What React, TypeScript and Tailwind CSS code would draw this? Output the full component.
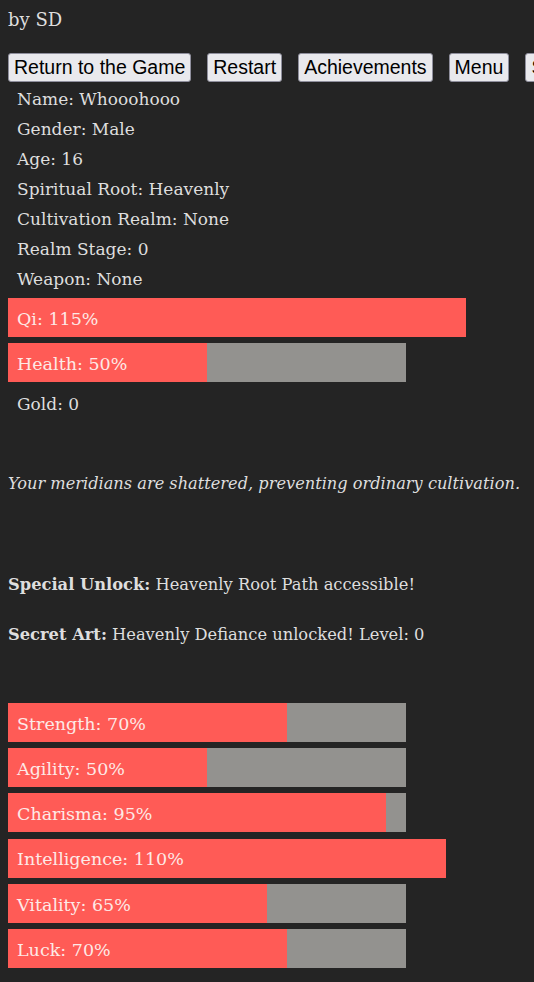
const info = [
  "Name: Whooohooo",
  "Gender: Male",
  "Age: 16",
  "Spiritual Root: Heavenly",
  "Cultivation Realm: None",
  "Realm Stage: 0",
  "Weapon: None",
];

const attributes = [
  { label: "Strength", value: 70 },
  { label: "Agility", value: 50 },
  { label: "Charisma", value: 95 },
  { label: "Intelligence", value: 110 },
  { label: "Vitality", value: 65 },
  { label: "Luck", value: 70 },
];

function Bar({ label, value }: { label: string; value: number }) {
  return (
    <div className="relative h-[39px] w-[398px] bg-[#93928f]">
      <div className="absolute left-0 top-0 h-full bg-[#ff5b56]" style={{ width: `${value}%` }} />
      <span className="relative flex h-full items-center pl-[9px] pt-[3px] text-[17.5px] text-[#fde9e6]">
        {label}: {value}%
      </span>
    </div>
  );
}

export default function App() {
  return (
    <div
      className="min-h-[982px] w-full overflow-hidden bg-[#242424] px-2 text-[17px] text-[#dedede]"
      style={{ fontFamily: '"DejaVu Serif", serif' }}
    >
      <div className="pt-[7px] text-[18px] leading-[26px]">by SD</div>

      <div className="mt-[20px] flex gap-4 whitespace-nowrap" style={{ fontFamily: '"Liberation Sans", Arial, sans-serif' }}>
        {["Return to the Game", "Restart", "Achievements", "Menu", "Settings"].map((b) => (
          <button
            key={b}
            className="h-[29px] shrink-0 rounded-[3px] border border-[#8f8f9d] bg-[#e9e9ed] px-[5px] text-[19.5px] leading-none text-black"
          >
            {b}
          </button>
        ))}
      </div>

      <div className="mt-[2px] pl-[9px]">
        {info.map((t) => (
          <div key={t} className="leading-[30px]">
            {t}
          </div>
        ))}
      </div>

      <div className="mt-[4px] flex flex-col gap-[6px]">
        <Bar label="Qi" value={115} />
        <Bar label="Health" value={50} />
      </div>

      <div className="mt-[7px] pl-[9px] leading-[30px]">Gold: 0</div>

      <p className="mt-[50px] whitespace-nowrap text-[16.2px] italic leading-[30px]">
        Your meridians are shattered, preventing ordinary cultivation.
      </p>

      <p className="mt-[71px] text-[16.3px] leading-[30px]">
        <b>Special Unlock:</b> Heavenly Root Path accessible!
      </p>
      <p className="mt-[20px] text-[16.3px] leading-[30px]">
        <b>Secret Art:</b> Heavenly Defiance unlocked! Level: 0
      </p>

      <div className="mt-[53px] flex flex-col gap-[6.2px] pb-4">
        {attributes.map((a) => (
          <Bar key={a.label} label={a.label} value={a.value} />
        ))}
      </div>
    </div>
  );
}
